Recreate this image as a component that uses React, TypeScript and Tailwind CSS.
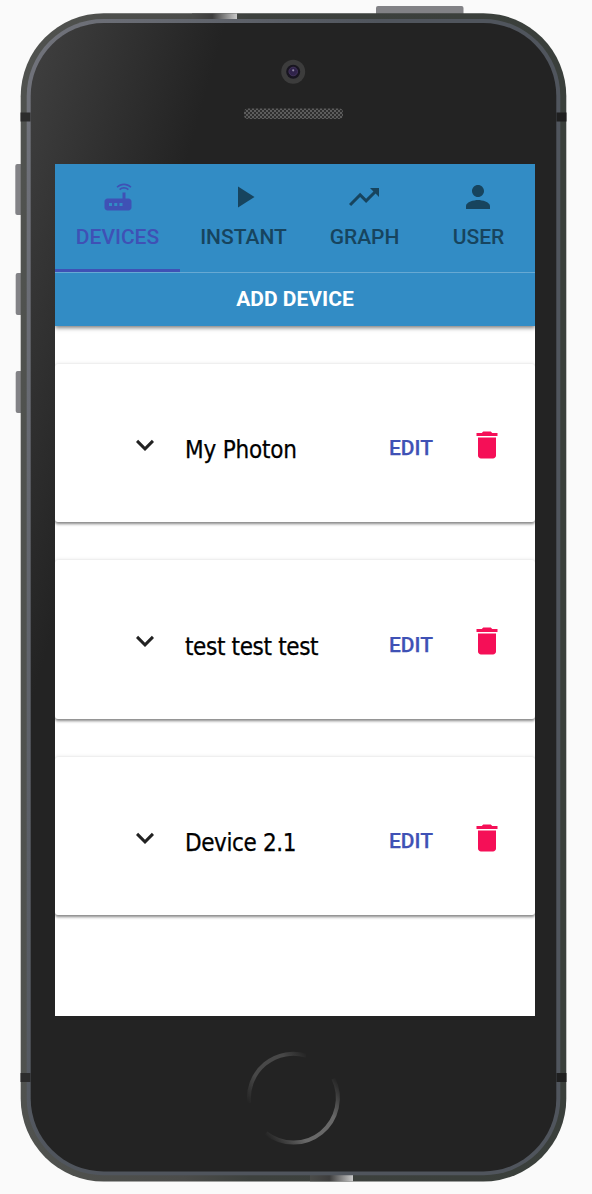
import React from "react";

const devices = [
  { name: "My Photon", tracking: "tracking-[-0.2px]" },
  { name: "test test test", tracking: "tracking-[-0.35px]" },
  { name: "Device 2.1", tracking: "tracking-[-0.4px]" },
];

const iconPaths = {
  router:
    "M20.2 5.9l.8-.8C19.6 3.7 17.8 3 16 3s-3.6.7-5 2.1l.8.8C13 4.8 14.500 4.200 16 4.200s3 .6 4.200 1.700zm-.9.8c-.9-.9-2.100-1.400-3.300-1.400s-2.400.5-3.300 1.400l.8.8c.7-.7 1.600-1 2.500-1 .9 0 1.800.3 2.500 1l.8-.8zM19 13h-2V9h-2v4H5c-1.100 0-2 .9-2 2v4c0 1.100.9 2 2 2h14c1.100 0 2-.9 2-2v-4c0-1.100-.9-2-2-2zM8 18H6v-2h2v2zm3.500 0h-2v-2h2v2zm3.500 0h-2v-2h2v2z",
  play: "M8 5v14l11-7z",
  trend: "M16 6l2.290 2.290-4.880 4.880-4-4L2 16.590 3.410 18l6-6 4 4 6.300-6.290L22 12V6z",
  person:
    "M12 12c2.210 0 4-1.790 4-4s-1.790-4-4-4-4 1.790-4 4 1.790 4 4 4zm0 2c-2.670 0-8 1.340-8 4v2h16v-2c0-2.660-5.330-4-8-4z",
  trash: "M6 19c0 1.100.9 2 2 2h8c1.100 0 2-.9 2-2V7H6v12zM19 4h-3.500l-1-1h-5l-1 1H5v2h14V4z",
  chevron: "M7.410 7.840L12 12.420l4.590-4.580L18 9.250l-6 6-6-6z",
};

function Icon({ path, className }: { path: string; className: string }) {
  return (
    <svg viewBox="0 0 24 24" fill="currentColor" className={className}>
      <path d={path} />
    </svg>
  );
}

function Tab({ path, label, className, icon }: { path: string; label: string; className: string; icon: string }) {
  return (
    <div className={`flex h-[108px] flex-col items-center pt-[15px] ${className}`}>
      <Icon path={path} className={`shrink-0 ${icon}`} />
      <span className="mt-[9px] text-[21px] leading-[26px] font-medium">{label}</span>
    </div>
  );
}

function DeviceCard({ name, tracking }: { name: string; tracking: string }) {
  return (
    <div className="flex h-[158.5px] shrink-0 rounded-[3px] bg-white pt-[60px] shadow-[0_2px_3px_rgba(0,0,0,0.45),0_0_4px_rgba(0,0,0,0.12)]">
      <Icon path={iconPaths.chevron} className="mt-[4px] ml-[72px] size-9 shrink-0 text-[#222]" />
      <span
        className={`mt-[11.7px] ml-[22px] w-[204px] text-[24px] leading-[30px] whitespace-pre text-black [-webkit-text-stroke:0.25px_black] [font-family:'DejaVu_Sans_Condensed','DejaVu_Sans',sans-serif] ${tracking}`}
      >
        {name}
      </span>
      <span className="mt-[11.7px] w-[44px] text-[21px] leading-[26px] font-medium text-[#3f51b5] [-webkit-text-stroke:0.25px_#3f51b5]">
        EDIT
      </span>
      <Icon path={iconPaths.trash} className="mt-[3.2px] ml-[36px] size-9 shrink-0 text-[#f50f57]" />
    </div>
  );
}

function Hardware() {
  return (
    <svg width="592" height="1194" viewBox="0 0 592 1194" className="absolute inset-0">
      <defs>
        <linearGradient id="rim" x1="0" x2="1">
          <stop offset="0" stopColor="#50524f" />
          <stop offset="0.3" stopColor="#4b4c4a" />
          <stop offset="0.42" stopColor="#3d413e" />
          <stop offset="1" stopColor="#3a3f3b" />
        </linearGradient>
        <linearGradient id="band" gradientUnits="userSpaceOnUse" x1="30" y1="100" x2="330" y2="186">
          <stop offset="0" stopColor="#70727a" />
          <stop offset="1" stopColor="#50555d" />
        </linearGradient>
        <linearGradient id="glass" gradientUnits="userSpaceOnUse" x1="30" y1="100" x2="191" y2="146">
          <stop offset="0" stopColor="#3d3d3d" />
          <stop offset="1" stopColor="#232323" />
        </linearGradient>
        <linearGradient id="shine" x1="0" x2="1">
          <stop offset="0" stopColor="#4b4c4a" />
          <stop offset="0.45" stopColor="#3d3d3d" />
          <stop offset="1" stopColor="#c9c9c9" />
        </linearGradient>
        <linearGradient id="homeTop" gradientUnits="userSpaceOnUse" x1="248" y1="1103" x2="306" y2="1053">
          <stop offset="0" stopColor="#484848" stopOpacity="0" />
          <stop offset="0.3" stopColor="#484848" />
          <stop offset="0.75" stopColor="#484848" />
          <stop offset="1" stopColor="#484848" stopOpacity="0" />
        </linearGradient>
        <linearGradient id="homeBottom" gradientUnits="userSpaceOnUse" x1="266" y1="1136" x2="335" y2="1077">
          <stop offset="0" stopColor="#686868" stopOpacity="0" />
          <stop offset="0.3" stopColor="#686868" />
          <stop offset="0.7" stopColor="#686868" />
          <stop offset="1" stopColor="#686868" stopOpacity="0" />
        </linearGradient>
        <pattern id="mesh" width="4" height="4" patternUnits="userSpaceOnUse">
          <rect width="4" height="4" fill="#2e2e2e" />
          <path d="M0 0h2v2H0zM2 2h2v2H2z" fill="#5c5c5c" />
        </pattern>
      </defs>
      <g fill="#828286">
        <rect x="376" y="6" width="87.500" height="12" rx="2" />
        <rect x="15.300" y="164" width="12" height="51" rx="2" />
        <rect x="15.700" y="273" width="12" height="42" rx="2" />
        <rect x="15.700" y="371" width="12" height="42" rx="2" />
      </g>
      <rect x="20.700" y="13.200" width="545.600" height="1168.300" rx="83" fill="url(#rim)" />
      <rect x="192" y="13.500" width="45" height="7" fill="url(#shine)" />
      <rect x="310" y="1174" width="43" height="7.300" fill="url(#shine)" />
      <rect x="26.700" y="19" width="533.600" height="1156.300" rx="77" fill="url(#band)" />
      <rect x="30.700" y="23" width="525.600" height="1148.500" rx="73" fill="url(#glass)" />
      <path d="M20.500 112.500h10v9h-10zM20.500 1073h10v9h-10z" fill="#2c2c2c" />
      <path d="M556.500 112.500h10v9h-10zM556.500 1073h10v9h-10z" fill="#1f1f1f" />
      <circle cx="293.200" cy="71.700" r="12" fill="#3c3c3c" />
      <circle cx="293.200" cy="71.700" r="7" fill="#181520" />
      <circle cx="293.200" cy="71.500" r="4.300" fill="#30234b" stroke="#45365f" strokeWidth="0.9" />
      <circle cx="293.200" cy="70.300" r="1.100" fill="#9088a5" />
      <rect x="244" y="108.500" width="99" height="10.500" rx="4" fill="url(#mesh)" />
      <g fill="none" strokeWidth="4">
        <path d="M249.100 1103A44.500 44.500 0 0 1 306 1055.600" stroke="url(#homeTop)" />
        <path d="M266 1133.200A44.500 44.500 0 0 0 333.400 1078.700" stroke="url(#homeBottom)" />
      </g>
    </svg>
  );
}

export default function App() {
  return (
    <div className="relative h-[1194px] w-[592px] overflow-hidden bg-[#fafafa] pt-[164px] pl-[55px] [font-family:Roboto,sans-serif]">
      <Hardware />
      <main className="relative flex h-[852px] w-[480px] flex-col overflow-hidden bg-white">
        <header className="shrink-0 bg-[#328cc5] shadow-[0_2px_4px_rgba(0,0,0,0.5)]">
          <nav className="flex h-[108px] text-[#17445e]">
            <Tab path={iconPaths.router} label="DEVICES" className="w-[125px] border-b-3 border-[#3f51b5] text-[#3f51b5]" icon="size-9" />
            <Tab path={iconPaths.play} label="INSTANT" className="w-[127px]" icon="size-9" />
            <Tab path={iconPaths.trend} label="GRAPH" className="w-[115px]" icon="size-9 mr-[2px]" />
            <Tab path={iconPaths.person} label="USER" className="w-[113px]" icon="size-9 mr-[2px]" />
          </nav>
          <div className="flex h-[53.5px] items-center justify-center border-t border-[#67a9d3] text-[21px] font-bold text-white">
            <span>ADD DEVICE</span>
          </div>
        </header>
        <div className="flex flex-col gap-[38px] pt-[38px]">
          {devices.map((device) => (
            <DeviceCard key={device.name} name={device.name} tracking={device.tracking} />
          ))}
        </div>
      </main>
    </div>
  );
}
